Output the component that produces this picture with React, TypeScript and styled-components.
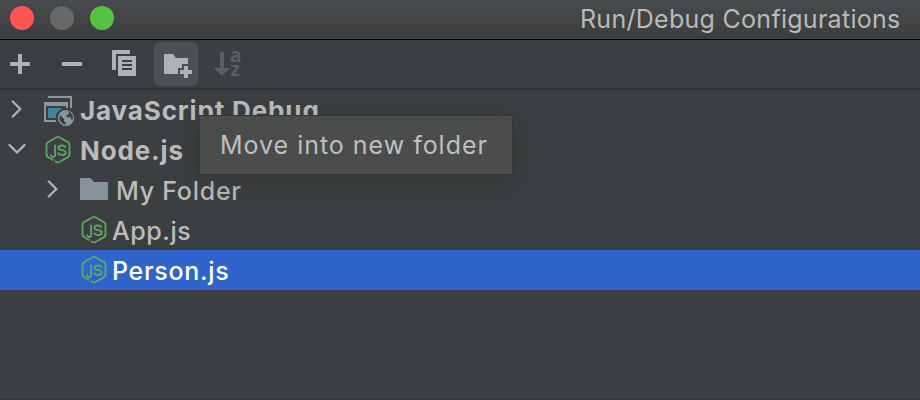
import React from "react";
import styled, { createGlobalStyle } from "styled-components";

const GlobalStyle = createGlobalStyle`
  * { box-sizing: border-box; }
  body { margin: 0; background: #3c3f41; font-family: Inter, "Liberation Sans", sans-serif; }
  svg { display: block; flex: none; }
`;

const Window = styled.div`
  position: relative;
  display: flex;
  flex-direction: column;
  width: 920px;
  height: 400px;
  overflow: hidden;
  background: #3c3f41;
  border-bottom: 1px solid #393338;
  color: #bbbbbb;
`;

const TitleBar = styled.header`
  display: flex;
  align-items: center;
  height: 40px;
  padding: 0 20px 4px 10px;
  background: linear-gradient(#484b4d, #3c3d3e);
  border-bottom: 1px solid #000;
`;

const Lights = styled.div`
  display: flex;
  gap: 16px;
`;

const Light = styled.span<{ $color: string }>`
  width: 24px;
  height: 24px;
  border-radius: 50%;
  background: ${(p) => p.$color};
`;

const Title = styled.h1`
  margin: 3px 0 0 466px;
  font-size: 25px;
  line-height: 30px;
  font-weight: 430;
  letter-spacing: 0.28px;
  white-space: nowrap;
  color: #b9babb;
`;

const Toolbar = styled.div`
  display: flex;
  align-items: flex-start;
  gap: 8px;
  height: 50px;
  padding-top: 2px;
  border-bottom: 2px solid #343434;
`;

const ToolButton = styled.button<{ $hovered?: boolean }>`
  display: grid;
  place-items: center;
  width: 44px;
  height: 44px;
  padding: 0;
  border: 0;
  border-radius: 6px;
  color: #afb1b3;
  background: ${(p) => (p.$hovered ? "#4c5052" : "transparent")};

  &:first-child { margin-left: -2px; }
`;

const Tree = styled.div`
  display: flex;
  flex-direction: column;
`;

const Row = styled.div<{ $selected?: boolean; $indent: number }>`
  display: flex;
  align-items: center;
  height: 40px;
  padding-left: ${(p) => p.$indent}px;
  background: ${(p) => (p.$selected ? "#2f65ca" : "transparent")};
  color: ${(p) => (p.$selected ? "#ffffff" : "#bbbbbb")};
`;

const Label = styled.span<{ $bold?: boolean; $spacing: number; $gap: number }>`
  margin: 2px 0 0 ${(p) => p.$gap}px;
  font-size: ${(p) => (p.$bold ? 26 : 25)}px;
  line-height: 30px;
  font-weight: ${(p) => (p.$bold ? 700 : 450)};
  letter-spacing: ${(p) => p.$spacing}px;
  white-space: nowrap;
`;

const Tooltip = styled.div`
  position: absolute;
  left: 199px;
  top: 115px;
  width: 314px;
  height: 60px;
  padding: 14px 0 0 20px;
  background: #4b4d4d;
  border: 1px solid #343637;
  box-shadow: 0 8px 24px rgba(35, 35, 38, 0.3);
  color: #bfbfbf;
  font-size: 25px;
  line-height: 30px;
  font-weight: 430;
  letter-spacing: 0.98px;
  white-space: nowrap;
`;

const PlusIcon = () => (
  <svg width="44" height="44" fill="#afb1b3"><path d="M20 12h4v8h8v4h-8v8h-4v-8h-8v-4h8z" /></svg>
);
const MinusIcon = () => (
  <svg width="44" height="44" fill="#afb1b3"><path d="M12 20h20v4H12z" /></svg>
);
const CopyIcon = () => (
  <svg width="44" height="44" fill="#afb1b3">
    <path d="M10 8h18v4H14v16h-4z" />
    <path fillRule="evenodd" d="M16 14h18v20H16zM20 18v2h10v-2zM20 22v2h10v-2zM20 26v2h10v-2z" />
  </svg>
);
const NewFolderIcon = () => (
  <svg width="44" height="44" fill="#afb1b3">
    <path d="M10 12h9l3 4h12v6h-6v4h-4v6H10z" />
    <path d="M30 24h4v4h4v4h-4v4h-4v-4h-4v-4h4z" />
  </svg>
);
const SortIcon = () => (
  <svg width="44" height="44" fill="#5c5e5f">
    <path d="M14 10h4v16h6l-8 8-8-8h6z" />
    <text fontFamily="Open Sans" fontWeight="700" fontSize="19">
      <tspan x="24" y="20">a</tspan>
      <tspan x="24.500" y="34">z</tspan>
    </text>
  </svg>
);

const Chevron = ({ open }: { open?: boolean }) => (
  <svg width="20" height="20" viewBox="0 0 20 20" fill="none" stroke="#afb1b3" strokeWidth="2.4" strokeLinecap="round" strokeLinejoin="round">
    <path d={open ? "M2.5 5l7.500 7.500L17.500 5" : "M6.800 1.500l7.500 7.500-7.500 7.500"} />
  </svg>
);

const DebugIcon = () => (
  <svg width="32" height="32" viewBox="0 0 32 32">
    <path fill="#8a979f" d="M6 2h24v12h-2V4H6zM2 8h24v6h-2v-2H4v14h10v2H2z" />
    <path fill="#3e86a0" d="M6 14h14l-6 6v4H6z" />
    <circle cx="24" cy="24" r="9" fill="#3c3f41" />
    <circle cx="24" cy="24" r="8" fill="#8a979f" />
    <path fill="#3c3f41" d="M18 21l4 4v2l2 2v1.500c-4 0-6.500-3-6.500-6.500 0-1 .2-2 .5-3zM24 17.500l3 .7-.5 2-2 1v2h4l1.500 3.200 1-2.400c0-2-.8-3.500-2-4.700L27 17.500z" />
  </svg>
);

const NodeIcon = () => (
  <svg width="28" height="30" viewBox="0 0 28 30" fill="none" stroke="#5fad65" strokeOpacity="0.9" strokeWidth="1.900" strokeLinejoin="round">
    <path d="M9.500 25.300L4.400 22.300Q2.500 21.300 2.500 19.500V9.800Q2.500 8 4.100 7.100L12.500 2.300Q14 1.500 15.500 2.300L23.900 7.100Q25.500 8 25.500 9.800V19.500Q25.500 21.300 23.900 22.200L15.500 27Q14 27.800 12.600 27L10.800 26" />
    <path d="M11.100 9.800V19.800Q11.100 22 9.200 22Q7.100 22 7 19.500" />
    <path d="M21.200 12.800Q21.100 10.500 17.900 10.500Q14.500 10.500 14.500 12.800Q14.500 14.800 17.900 15.100Q21.700 15.400 21.700 17.700Q21.700 20 18.200 20Q14.300 20 14.200 17.500" />
  </svg>
);

const FolderIcon = () => (
  <svg width="28" height="24" fill="#87939a"><path d="M0 0h10.500l3.500 4h14v18H0z" /></svg>
);

const Gap = styled.span<{ $width: number }>`
  flex: none;
  width: ${(p) => p.$width}px;
`;

export default function App() {
  return (
    <Window>
      <GlobalStyle />
      <TitleBar>
        <Lights>
          <Light $color="#ff5652" />
          <Light $color="#66686a" />
          <Light $color="#53c342" />
        </Lights>
        <Title>Run/Debug Configurations</Title>
      </TitleBar>
      <Toolbar>
        <ToolButton aria-label="Add"><PlusIcon /></ToolButton>
        <ToolButton aria-label="Remove"><MinusIcon /></ToolButton>
        <ToolButton aria-label="Copy"><CopyIcon /></ToolButton>
        <ToolButton aria-label="Move into new folder" $hovered><NewFolderIcon /></ToolButton>
        <ToolButton aria-label="Sort"><SortIcon /></ToolButton>
      </Toolbar>
      <Tree>
        <Row $indent={6}>
          <Chevron /><Gap $width={16} /><DebugIcon />
          <Label $bold $gap={6} $spacing={0.87}>JavaScript Debug</Label>
        </Row>
        <Row $indent={7}>
          <Chevron open /><Gap $width={17} /><NodeIcon />
          <Label $bold $gap={8} $spacing={0.84}>Node.js</Label>
        </Row>
        <Row $indent={42}>
          <Chevron /><Gap $width={18} /><FolderIcon />
          <Label $gap={8} $spacing={0.74}>My Folder</Label>
        </Row>
        <Row $indent={80}>
          <NodeIcon /><Label $gap={4} $spacing={0.55}>App.js</Label>
        </Row>
        <Row $indent={80} $selected>
          <NodeIcon /><Label $gap={4} $spacing={0.7}>Person.js</Label>
        </Row>
      </Tree>
      <Tooltip role="tooltip">Move into new folder</Tooltip>
    </Window>
  );
}
